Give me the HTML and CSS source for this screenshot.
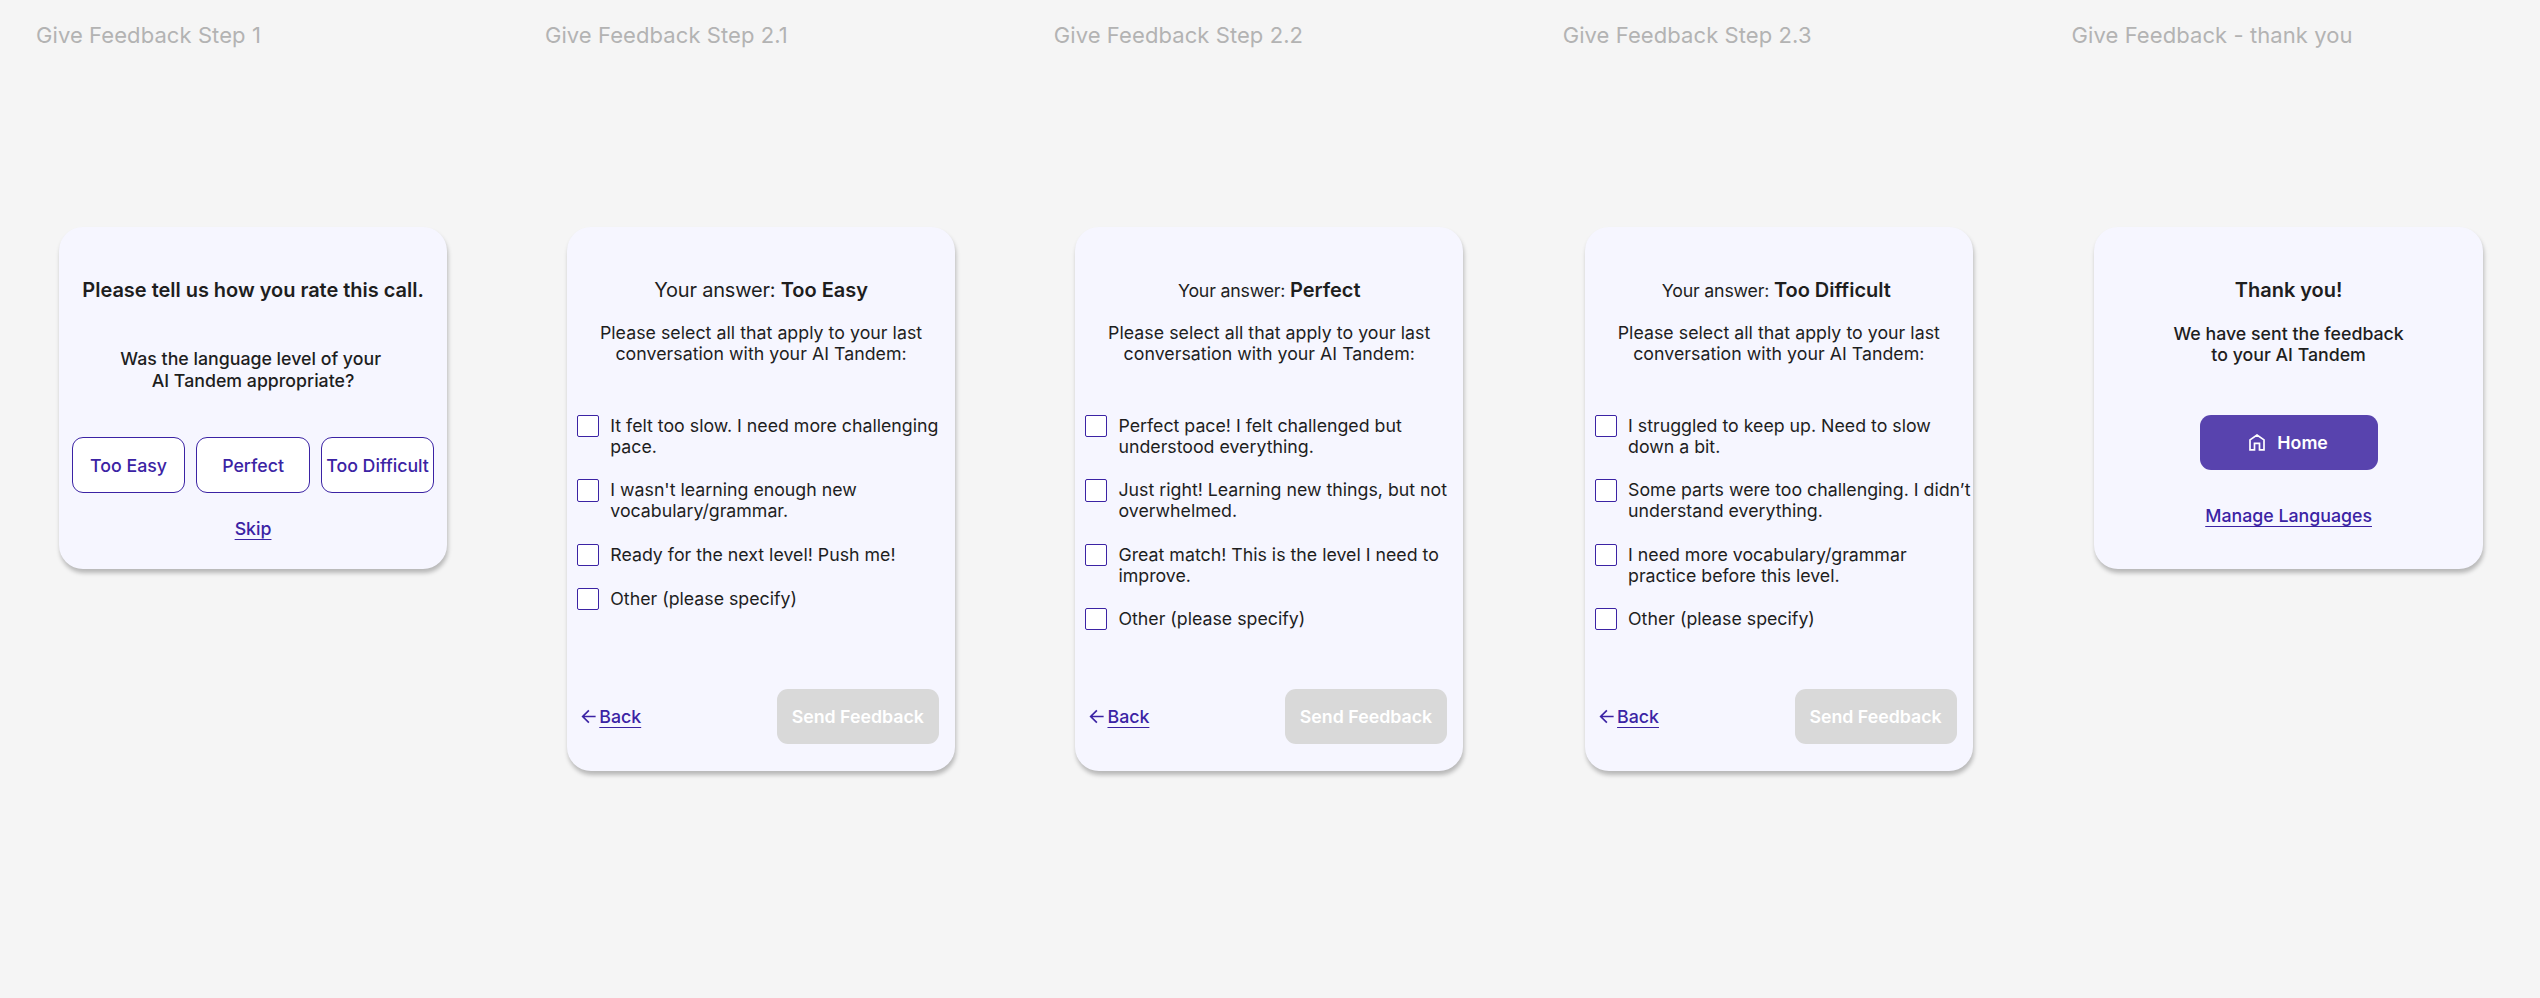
FILE: index.html
```html
<!DOCTYPE html>
<html lang="en">
<head>
<meta charset="utf-8">
<title>Give Feedback</title>
<link rel="stylesheet" href="styles.css">
</head>
<body>
<svg class="defs" width="0" height="0" aria-hidden="true">
  <symbol id="arrow" viewBox="0 0 16 16"><path d="M15.6 8H1.8M8.4 1.4 1.8 8 8.4 14.6" fill="none" stroke="currentColor" stroke-width="1.8"/></symbol>
  <symbol id="home" viewBox="0 0 16 17"><path d="M1 5.9 8 1 15 5.9V15.9H10.5V9.3H5.5V15.9H1Z" fill="none" stroke="currentColor" stroke-width="1.7"/></symbol>
</svg>
<main class="board">
  <section class="frame">
    <h2 class="frame-title">Give Feedback Step 1</h2>
    <div class="card card-short">
      <h3 class="heading">Please tell us how you rate this call.</h3>
      <p class="question">Was the language level of your&nbsp;<br>AI Tandem appropriate?</p>
      <div class="choices">
        <button class="choice">Too Easy</button>
        <button class="choice">Perfect</button>
        <button class="choice">Too Difficult</button>
      </div>
      <a class="link skip">Skip</a>
    </div>
  </section>

  <section class="frame">
    <h2 class="frame-title">Give Feedback Step 2.1</h2>
    <div class="card card-tall">
      <h3 class="heading"><span class="lead lead-large">Your answer: </span>Too Easy</h3>
      <p class="intro">Please select all that apply to your last<br>conversation with your AI Tandem:</p>
      <ul class="options">
        <li class="option"><span class="box"></span><span>It felt too slow. I need more challenging<br>pace.</span></li>
        <li class="option"><span class="box"></span><span>I wasn't learning enough new<br>vocabulary/grammar.</span></li>
        <li class="option"><span class="box"></span><span>Ready for the next level! Push me!</span></li>
        <li class="option"><span class="box"></span><span>Other (please specify)</span></li>
      </ul>
      <div class="actions">
        <span class="back"><svg class="arrow"><use href="#arrow"/></svg><a class="link">Back</a></span>
        <button class="send">Send Feedback</button>
      </div>
    </div>
  </section>

  <section class="frame frame-narrow">
    <h2 class="frame-title">Give Feedback Step 2.2</h2>
    <div class="card card-tall">
      <h3 class="heading"><span class="lead">Your answer: </span>Perfect</h3>
      <p class="intro">Please select all that apply to your last<br>conversation with your AI Tandem:</p>
      <ul class="options">
        <li class="option"><span class="box"></span><span>Perfect pace! I felt challenged but<br>understood everything.</span></li>
        <li class="option"><span class="box"></span><span>Just right! Learning new things, but not<br>overwhelmed.</span></li>
        <li class="option"><span class="box"></span><span>Great match! This is the level I need to<br>improve.</span></li>
        <li class="option"><span class="box"></span><span>Other (please specify)</span></li>
      </ul>
      <div class="actions">
        <span class="back"><svg class="arrow"><use href="#arrow"/></svg><a class="link">Back</a></span>
        <button class="send">Send Feedback</button>
      </div>
    </div>
  </section>

  <section class="frame">
    <h2 class="frame-title">Give Feedback Step 2.3</h2>
    <div class="card card-tall">
      <h3 class="heading heading-shifted"><span class="lead">Your answer: </span>Too Difficult</h3>
      <p class="intro">Please select all that apply to your last<br>conversation with your AI Tandem:</p>
      <ul class="options">
        <li class="option"><span class="box"></span><span>I struggled to keep up. Need to slow<br>down a bit.</span></li>
        <li class="option"><span class="box"></span><span>Some parts were too challenging. I didn’t<br>understand everything.</span></li>
        <li class="option"><span class="box"></span><span>I need more vocabulary/grammar<br>practice before this level.</span></li>
        <li class="option"><span class="box"></span><span>Other (please specify)</span></li>
      </ul>
      <div class="actions">
        <span class="back"><svg class="arrow"><use href="#arrow"/></svg><a class="link">Back</a></span>
        <button class="send">Send Feedback</button>
      </div>
    </div>
  </section>

  <section class="frame">
    <h2 class="frame-title">Give Feedback - thank you</h2>
    <div class="card card-short">
      <h3 class="heading">Thank you!</h3>
      <p class="message">We have sent the feedback<br>to your AI Tandem</p>
      <button class="home"><svg class="home-icon"><use href="#home"/></svg>Home</button>
      <a class="link manage">Manage Languages</a>
    </div>
  </section>
</main>
</body>
</html>
```
FILE: styles.css
```css
* {
  box-sizing: border-box;
}

body {
  margin: 0;
  background: #f5f5f5;
  color: #1e1e1e;
  font-family: Inter, "Liberation Sans", sans-serif;
  font-size: 17.76px;
  line-height: 21.1px;
  overflow: hidden;
}

h2, h3, p, ul {
  margin: 0;
  padding: 0;
}

button {
  font: inherit;
  padding: 0;
  white-space: nowrap;
}

.defs {
  display: block;
}

.board {
  display: flex;
  height: 998px;
  padding-left: 36px;
}

.frame {
  flex: 0 0 508.9px;
}

.frame-title {
  height: 207px;
  margin-top: 20px;
  color: #b3b3b3;
  font-size: 22px;
  font-weight: 400;
  letter-spacing: 0.08px;
  line-height: 30px;
}

.card {
  display: flex;
  flex-direction: column;
  width: 388.5px;
  margin-left: 22.8px;
  padding-top: 50.6px;
  border-radius: 24px;
  background: #f6f6ff;
  box-shadow: 1px 4px 4px rgba(0, 0, 0, 0.25);
}

.card-short {
  height: 341.6px;
}

.card-tall {
  height: 543.6px;
  margin-left: 21.9px;
}

.frame-narrow .card {
  margin-left: 21.2px;
}

.heading {
  height: 24px;
  font-size: 20px;
  font-weight: 600;
  letter-spacing: -0.03px;
  line-height: 24px;
  text-align: center;
  white-space: nowrap;
}

.heading-shifted {
  padding-right: 5px;
}

.lead {
  font-size: 17.76px;
  font-weight: 400;
  letter-spacing: -0.2px;
}

.lead-large {
  font-size: 20px;
}

.question {
  margin-top: 46.9px;
  font-weight: 500;
  text-align: center;
}

.choices {
  display: flex;
  gap: 11px;
  margin: 46.8px 13px 0;
}

.choice {
  flex: 1 1 0;
  height: 55.5px;
  border: 1px solid #3b23a4;
  border-radius: 11px;
  background: #fff;
  color: #3b23a4;
  font-weight: 500;
}

.link {
  color: #3b23a4;
  font-weight: 500;
  text-decoration: underline;
  text-decoration-thickness: 1.1px;
  text-underline-offset: 3.5px;
  text-decoration-skip-ink: none;
}

.skip {
  align-self: center;
  margin-top: 25.5px;
}

.intro {
  margin-top: 20.4px;
  letter-spacing: 0.03px;
  text-align: center;
}

.options {
  display: flex;
  flex-direction: column;
  gap: 22.2px;
  margin: 50.8px 0 0 10px;
  list-style: none;
}

.option {
  display: flex;
  gap: 11.3px;
  min-height: 22.2px;
  white-space: nowrap;
}

.box {
  flex: none;
  width: 22.2px;
  height: 22.2px;
  border: 1px solid #3b23a4;
  border-radius: 2px;
  background: #fff;
}

.actions {
  display: flex;
  align-items: center;
  justify-content: space-between;
  margin: auto 16.5px 26.6px 14px;
}

.back {
  display: flex;
  align-items: center;
  gap: 3.5px;
  color: #3b23a4;
}

.arrow {
  width: 15px;
  height: 15px;
}

.send {
  width: 162px;
  height: 55.5px;
  border: 0;
  border-radius: 11px;
  background: #d9d9d9;
  color: #fff;
  font-weight: 600;
}

.message {
  margin-top: 21.4px;
  font-weight: 500;
  text-align: center;
}

.home {
  display: flex;
  align-items: center;
  justify-content: center;
  gap: 12px;
  align-self: center;
  width: 178px;
  height: 55.5px;
  margin-top: 49.8px;
  border: 0;
  border-radius: 11px;
  background: #5843ae;
  color: #fff;
  font-weight: 600;
}

.home-icon {
  width: 16px;
  height: 17px;
}

.manage {
  align-self: center;
  margin-top: 34.8px;
}
```
